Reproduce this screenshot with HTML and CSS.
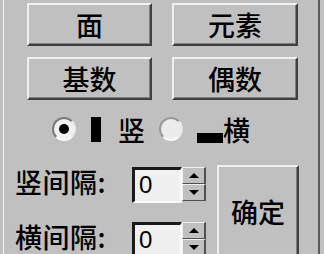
FILE: index.html
```html
<!DOCTYPE html>
<html lang="zh">
<head>
<meta charset="utf-8">
<link rel="stylesheet" href="styles.css">
</head>
<body>
<div class="panel">
  <div class="btn-grid">
    <div class="btn">面</div>
    <div class="btn">元素</div>
    <div class="btn">基数</div>
    <div class="btn">偶数</div>
  </div>
  <div class="radio-row">
    <span class="radio checked"><span class="dot"></span></span>
    <span class="vbar"></span>
    <span class="rlabel">竖</span>
    <span class="radio second"></span>
    <span class="hbar"></span>
    <span class="rlabel">横</span>
  </div>
  <div class="bottom">
    <div class="fields">
      <div class="field">
        <span class="flabel">竖间隔:</span>
        <span class="input">0</span>
        <span class="spin"><span class="half"><span class="up"></span></span><span class="half"><span class="down"></span></span></span>
      </div>
      <div class="field">
        <span class="flabel">横间隔:</span>
        <span class="input">0</span>
        <span class="spin"><span class="half"><span class="up"></span></span><span class="half"><span class="down"></span></span></span>
      </div>
    </div>
    <div class="btn ok">确定</div>
  </div>
</div>
</body>
</html>
```

FILE: styles.css
```css
html, body {
  margin: 0;
  padding: 0;
}
body {
  width: 324px;
  height: 254px;
  overflow: hidden;
  background: #c0c0c0;
  font-family: "Noto Sans CJK SC", "Liberation Sans", sans-serif;
  color: #000;
}
.panel {
  margin-left: 3px;
  width: 317px;
  height: 254px;
  box-sizing: border-box;
  border-left: 1px solid #f4f4f4;
  border-right: 2px solid #5a5a5a;
}
.btn-grid {
  display: grid;
  grid-template-columns: 125px 126px;
  grid-auto-rows: 43px;
  column-gap: 20px;
  row-gap: 11px;
  padding: 3px 0 0 23px;
}
.btn {
  box-sizing: border-box;
  display: flex;
  align-items: center;
  justify-content: center;
  font-size: 27px;
  font-weight: 500;
  line-height: 1;
  background: #c0c0c0;
  border-top: 2px solid #f0f0f0;
  border-left: 2px solid #f0f0f0;
  border-right: 2px solid #404040;
  border-bottom: 2px solid #404040;
  box-shadow: inset -1px -1px 0 #808080;
}
.radio-row {
  display: flex;
  align-items: center;
  height: 30px;
  margin-top: 14px;
  padding-left: 48px;
}
.radio {
  box-sizing: border-box;
  width: 24px;
  height: 24px;
  border-radius: 50%;
  background: #f2f2f2;
  border: 2px solid;
  border-color: #7a7a7a #e8e8e8 #f8f8f8 #7a7a7a;
  display: flex;
  align-items: center;
  justify-content: center;
}
.dot {
  width: 10px;
  height: 10px;
  border-radius: 50%;
  background: #000;
}
.second {
  margin-left: 14px;
  background: #ececec;
  border-color: #9a9a9a #e8e8e8 #f8f8f8 #9a9a9a;
}
.vbar {
  width: 10px;
  height: 25px;
  background: #000;
  margin-left: 15px;
}
.rlabel {
  font-size: 27px;
  font-weight: 500;
  line-height: 1;
}
.vbar + .rlabel {
  margin-left: 17px;
}
.hbar {
  width: 26px;
  height: 10px;
  background: #000;
  margin-left: 14px;
  align-self: flex-end;
  margin-bottom: 1px;
}
.bottom {
  display: flex;
  align-items: flex-start;
  margin-top: 21px;
}
.fields {
  display: flex;
  flex-direction: column;
  row-gap: 19px;
  padding: 2px 0 0 11px;
}
.field {
  display: flex;
  align-items: center;
  height: 36px;
}
.flabel {
  width: 117px;
  font-size: 27px;
  font-weight: 500;
  line-height: 1;
  letter-spacing: 0.5px;
  margin-top: -8px;
}
.input {
  box-sizing: border-box;
  width: 50px;
  height: 36px;
  background: #f0f0f0;
  border-top: 3px solid #1a1a1a;
  border-left: 3px solid #1a1a1a;
  border-right: 2px solid #fafafa;
  border-bottom: 2px solid #fafafa;
  font-family: "Liberation Sans", sans-serif;
  font-size: 24px;
  line-height: 30px;
  padding-left: 4px;
}
.spin {
  box-sizing: border-box;
  width: 24px;
  height: 34px;
  display: flex;
  flex-direction: column;
  align-self: flex-start;
}
.half {
  flex: 1;
  display: flex;
  align-items: center;
  justify-content: center;
  background: #c0c0c0;
  border-top: 1px solid #f0f0f0;
  border-left: 1px solid #f0f0f0;
  border-right: 2px solid #505050;
  border-bottom: 1px solid #505050;
}
.up {
  width: 0;
  height: 0;
  border-left: 5px solid transparent;
  border-right: 5px solid transparent;
  border-bottom: 5px solid #000;
}
.down {
  width: 0;
  height: 0;
  border-left: 5px solid transparent;
  border-right: 5px solid transparent;
  border-top: 5px solid #000;
}
.ok {
  width: 82px;
  height: 93px;
  margin-left: 11px;
}
```
